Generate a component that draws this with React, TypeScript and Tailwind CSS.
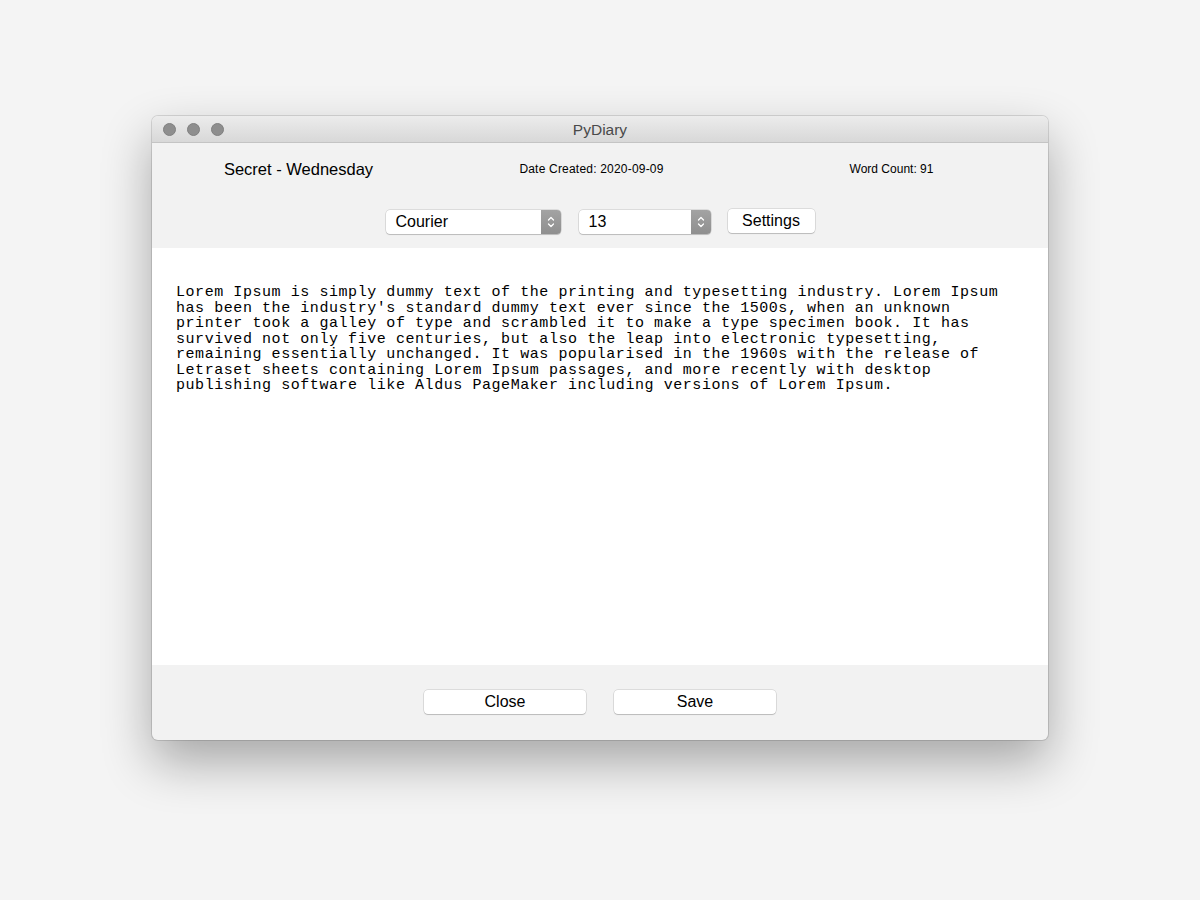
const lines = [
  "Lorem Ipsum is simply dummy text of the printing and typesetting industry. Lorem Ipsum",
  "has been the industry's standard dummy text ever since the 1500s, when an unknown",
  "printer took a galley of type and scrambled it to make a type specimen book. It has",
  "survived not only five centuries, but also the leap into electronic typesetting,",
  "remaining essentially unchanged. It was popularised in the 1960s with the release of",
  "Letraset sheets containing Lorem Ipsum passages, and more recently with desktop",
  "publishing software like Aldus PageMaker including versions of Lorem Ipsum.",
];

function Stepper() {
  return (
    <div className="w-[20px] h-full bg-gradient-to-b from-[#a3a3a3] to-[#8f8f8f] rounded-r-[4px] flex items-center justify-center">
      <svg width="8" height="14" viewBox="0 0 8 14" fill="none" stroke="#ffffff" strokeWidth="1.3" strokeLinecap="round" strokeLinejoin="round">
        <path d="M1.5 5 L4 2.5 L6.5 5" />
        <path d="M1.5 9 L4 11.5 L6.5 9" />
      </svg>
    </div>
  );
}

function Select({ value, width }: { value: string; width: string }) {
  return (
    <div className={`${width} h-[24px] bg-white rounded-[4px] flex items-stretch shadow-[0_0_0_0.5px_rgba(0,0,0,0.18),0_1px_1px_rgba(0,0,0,0.15)]`}>
      <div className="flex-1 flex items-center pl-[10px] text-[16px] text-black">{value}</div>
      <Stepper />
    </div>
  );
}

function Button({ label, width }: { label: string; width: string }) {
  return (
    <div className={`${width} h-[24px] bg-white rounded-[4px] flex items-center justify-center text-[16px] text-black shadow-[0_0_0_0.5px_rgba(0,0,0,0.18),0_1px_1px_rgba(0,0,0,0.15)]`}>
      {label}
    </div>
  );
}

export default function App() {
  return (
    <div className="min-h-[900px] w-full bg-[#f4f4f4] flex justify-center pt-[116px]" style={{ fontFamily: '"Liberation Sans", Arial, sans-serif' }}>
      <div className="w-[896px] h-[624px] flex flex-col rounded-[6px] overflow-hidden bg-[#f2f2f2] shadow-[0_0_0_1px_rgba(0,0,0,0.12),0_22px_50px_rgba(0,0,0,0.32)]">
        {/* Title bar */}
        <div className="h-[27px] relative flex items-center justify-center bg-gradient-to-b from-[#ececec] to-[#d8d8d8] border-b border-[#c4c4c4]">
          <div className="absolute left-[11px] top-[7px] flex gap-[11px]">
            <div className="w-[13px] h-[13px] rounded-full bg-[#8e8e8e] border border-[#808080]" />
            <div className="w-[13px] h-[13px] rounded-full bg-[#8e8e8e] border border-[#808080]" />
            <div className="w-[13px] h-[13px] rounded-full bg-[#8e8e8e] border border-[#808080]" />
          </div>
          <span className="text-[15.5px] text-[#4a4a4a] pt-[2px]">PyDiary</span>
        </div>

        {/* Header info */}
        <div className="grid grid-cols-3 pr-[17px] pt-[2px] h-[50px] items-center">
          <div className="text-center text-[16.5px] text-black">Secret - Wednesday</div>
          <div className="text-center text-[12px] tracking-[0.2px] text-black">Date Created: 2020-09-09</div>
          <div className="text-center text-[12px] text-black pl-[14px]">Word Count: 91</div>
        </div>

        {/* Controls */}
        <div className="flex items-center justify-center pt-[17px] pb-[14px]">
          <div className="flex items-center">
            <Select value="Courier" width="w-[175px]" />
            <div className="w-[18px]" />
            <Select value="13" width="w-[132px]" />
            <div className="w-[17px]" />
            <div className="-mt-[2px]">
              <Button label="Settings" width="w-[87px]" />
            </div>
          </div>
        </div>

        {/* Editor */}
        <div className="h-[417px] bg-white pt-[37px] pl-[24px]">
          <div className="text-[15px] leading-[15.5px] tracking-[0.56px] text-black whitespace-pre" style={{ fontFamily: '"Liberation Mono", "Courier New", monospace' }}>
            {lines.map((l) => (
              <div key={l}>{l}</div>
            ))}
          </div>
        </div>

        {/* Footer */}
        <div className="flex-1 flex justify-center pt-[25px] gap-[28px]">
          <Button label="Close" width="w-[162px]" />
          <Button label="Save" width="w-[162px]" />
        </div>
      </div>
    </div>
  );
}
